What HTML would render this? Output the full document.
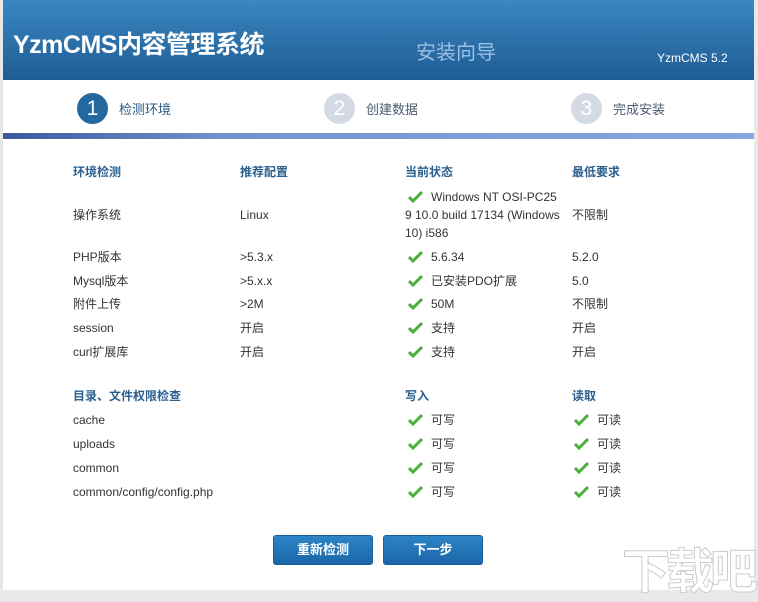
<!DOCTYPE html>
<html><head><meta charset="utf-8"><style>
*{margin:0;padding:0;box-sizing:border-box}
body{width:758px;height:594px;background:#e8e8e8;font-family:"Liberation Sans","Noto Sans CJK SC",sans-serif;font-size:12px;color:#333;position:relative;overflow:hidden}
.wrap{position:absolute;left:3px;top:0;width:751px;height:590px;background:#fff}
.hd{position:absolute;left:0;top:0;width:751px;height:80px;background:linear-gradient(#3a87c2,#1f5c94)}
.t1{position:absolute;left:10px;top:25px;color:#fff;font-size:25px;font-weight:bold;letter-spacing:-0.5px}
.t2{position:absolute;left:413px;top:36px;color:#9cc0e2;font-size:20px}
.t3{position:absolute;left:654px;top:51px;color:#fff;font-size:12px}
.step{position:absolute;top:92px;height:32px;display:flex;align-items:center;font-size:13px;color:#4a5a70}
.c{width:31px;height:31px;border-radius:50%;background:#d4dae4;color:#fff;font-size:21px;text-align:center;line-height:31px;margin-right:11px}
.step.on .c{background:#2468a0}
.step.on{color:#275a86}
.bar{position:absolute;left:0;top:133px;width:751px;height:6px;background:linear-gradient(90deg,#3a5a9c,#6f95d2 30%,#86a8dc)}
.r{position:absolute;white-space:nowrap;line-height:16px;height:16px}
.h{color:#2a5f8e;font-weight:bold;font-size:12px}
.ok{display:inline-block;width:15px;height:13px;vertical-align:-2px;margin-right:8px}
.btn{position:absolute;top:535px;width:100px;height:30px;border-radius:3px;background:linear-gradient(#2d84c6,#1a66a8);border:1px solid #195f9a;color:#fff;font-weight:bold;font-size:13px;text-align:center;line-height:28px}
.wm{position:absolute;left:622px;top:532px;font-size:48px;color:#fff;font-weight:bold;-webkit-text-stroke:1px #ccc;letter-spacing:-4px}
</style></head><body>
<div class="wrap">
<div class="hd"><div class="t1">YzmCMS内容管理系统</div><div class="t2">安装向导</div><div class="t3">YzmCMS 5.2</div></div>
<div class="step on" style="left:74px"><div class="c">1</div>检测环境</div>
<div class="step" style="left:321px"><div class="c">2</div>创建数据</div>
<div class="step" style="left:568px"><div class="c">3</div>完成安装</div>
<div class="bar"></div>
</div>
<svg width="0" height="0" style="position:absolute"><defs><symbol id="k" viewBox="0 0 15 13"><path d="M1 7 L5 11 L14 2" fill="none" stroke="#4cae3c" stroke-width="3"/></symbol></defs></svg>
<div style="position:absolute;left:0;top:0">
<div class="r h" style="left:73px;top:164px">环境检测</div>
<div class="r h" style="left:240px;top:164px">推荐配置</div>
<div class="r h" style="left:405px;top:164px">当前状态</div>
<div class="r h" style="left:572px;top:164px">最低要求</div>
<div class="r" style="left:73px;top:207px">操作系统</div>
<div class="r" style="left:240px;top:207px">Linux</div>
<div class="r" style="left:405px;top:188px;line-height:18px;height:auto"><svg class="ok" style="margin-left:3px"><use href="#k"/></svg>Windows NT OSI-PC25<br>9 10.0 build 17134 (Windows<br>10) i586</div>
<div class="r" style="left:572px;top:207px">不限制</div>

<div class="r" style="left:73px;top:249px">PHP版本</div><div class="r" style="left:240px;top:249px">&gt;5.3.x</div><div class="r" style="left:408px;top:249px"><svg class="ok"><use href="#k"/></svg>5.6.34</div><div class="r" style="left:572px;top:249px">5.2.0</div>
<div class="r" style="left:73px;top:273px">Mysql版本</div><div class="r" style="left:240px;top:273px">&gt;5.x.x</div><div class="r" style="left:408px;top:273px"><svg class="ok"><use href="#k"/></svg>已安装PDO扩展</div><div class="r" style="left:572px;top:273px">5.0</div>
<div class="r" style="left:73px;top:296px">附件上传</div><div class="r" style="left:240px;top:296px">&gt;2M</div><div class="r" style="left:408px;top:296px"><svg class="ok"><use href="#k"/></svg>50M</div><div class="r" style="left:572px;top:296px">不限制</div>
<div class="r" style="left:73px;top:320px">session</div><div class="r" style="left:240px;top:320px">开启</div><div class="r" style="left:408px;top:320px"><svg class="ok"><use href="#k"/></svg>支持</div><div class="r" style="left:572px;top:320px">开启</div>
<div class="r" style="left:73px;top:344px">curl扩展库</div><div class="r" style="left:240px;top:344px">开启</div><div class="r" style="left:408px;top:344px"><svg class="ok"><use href="#k"/></svg>支持</div><div class="r" style="left:572px;top:344px">开启</div>

<div class="r h" style="left:73px;top:388px">目录、文件权限检查</div>
<div class="r h" style="left:405px;top:388px">写入</div>
<div class="r h" style="left:572px;top:388px">读取</div>
<div class="r" style="left:73px;top:412px">cache</div><div class="r" style="left:408px;top:412px"><svg class="ok"><use href="#k"/></svg>可写</div><div class="r" style="left:574px;top:412px"><svg class="ok"><use href="#k"/></svg>可读</div>
<div class="r" style="left:73px;top:436px">uploads</div><div class="r" style="left:408px;top:436px"><svg class="ok"><use href="#k"/></svg>可写</div><div class="r" style="left:574px;top:436px"><svg class="ok"><use href="#k"/></svg>可读</div>
<div class="r" style="left:73px;top:460px">common</div><div class="r" style="left:408px;top:460px"><svg class="ok"><use href="#k"/></svg>可写</div><div class="r" style="left:574px;top:460px"><svg class="ok"><use href="#k"/></svg>可读</div>
<div class="r" style="left:73px;top:484px">common/config/config.php</div><div class="r" style="left:408px;top:484px"><svg class="ok"><use href="#k"/></svg>可写</div><div class="r" style="left:574px;top:484px"><svg class="ok"><use href="#k"/></svg>可读</div>
</div>
<div class="btn" style="left:273px">重新检测</div>
<div class="btn" style="left:383px">下一步</div>
<div class="wm">下载吧</div>
</body></html>
